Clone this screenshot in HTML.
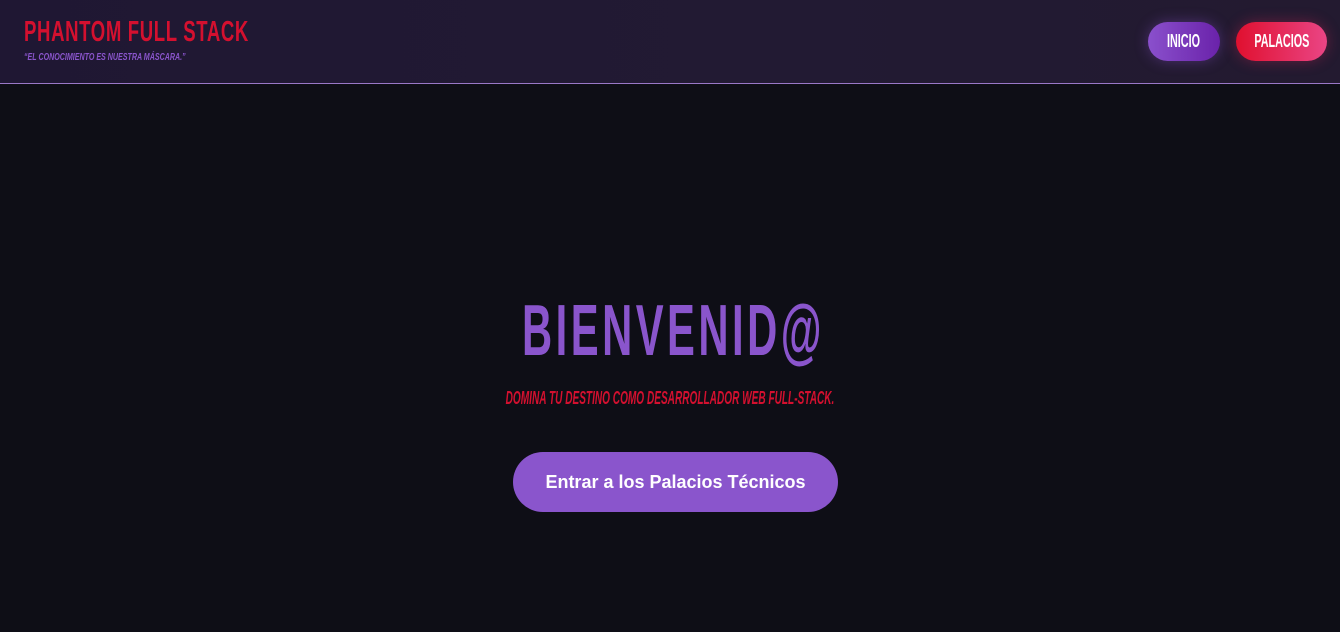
<!DOCTYPE html>
<html><head><meta charset="utf-8"><style>
*{margin:0;padding:0;box-sizing:border-box}
body{width:1340px;height:632px;background:#0e0e16;font-family:"Liberation Sans",sans-serif;position:relative;overflow:hidden}
header{position:absolute;left:0;top:0;width:1340px;height:84px;background:linear-gradient(90deg,#1f1733,#221a33 60%,#231a30);border-bottom:1px solid #9a78c8}
.c{position:absolute;white-space:nowrap;display:inline-block}
.t{left:24px;top:16px;font-size:29px;font-weight:bold;color:#d4102f;transform:scaleX(.64);transform-origin:left top;letter-spacing:1px}
.s{left:24px;top:52px;font-size:10px;font-weight:bold;font-style:italic;color:#8a55cc;transform:scaleX(.71);transform-origin:left top}
.b{position:absolute;top:22px;height:39px;border-radius:20px;color:#fff;font-weight:bold;font-size:18px;display:flex;align-items:center;justify-content:center}
.b span{display:inline-block;transform:scaleX(.6)}
.b1{left:1148px;width:72px;background:linear-gradient(90deg,#8a50cc,#6a22aa);box-shadow:0 0 14px rgba(138,80,204,.4)}
.b2{left:1236px;width:91px;background:linear-gradient(90deg,#e0102f,#ea4585);box-shadow:0 0 14px rgba(230,40,90,.35)}
.h{left:0;width:1340px;text-align:center;top:290px;font-size:72px;font-weight:bold;color:#8a55cc;transform:scaleX(.58);letter-spacing:6px;padding-left:12px}
.p{left:0;width:1340px;text-align:center;top:388px;font-size:18px;font-weight:bold;font-style:italic;color:#d4102f;transform:scaleX(.56)}
.btn{position:absolute;left:513px;top:452px;width:325px;height:60px;border-radius:30px;background:#8a55cc;color:#fff;font-weight:bold;font-size:18px;display:flex;align-items:center;justify-content:center}
</style></head><body>
<header>
<div class="c t">PHANTOM FULL STACK</div>
<div class="c s">“EL CONOCIMIENTO ES NUESTRA MÁSCARA.”</div>
<div class="b b1"><span>INICIO</span></div>
<div class="b b2"><span>PALACIOS</span></div>
</header>
<div class="c h">BIENVENID@</div>
<div class="c p">DOMINA TU DESTINO COMO DESARROLLADOR WEB FULL-STACK.</div>
<div class="btn">Entrar a los Palacios Técnicos</div>
</body></html>
